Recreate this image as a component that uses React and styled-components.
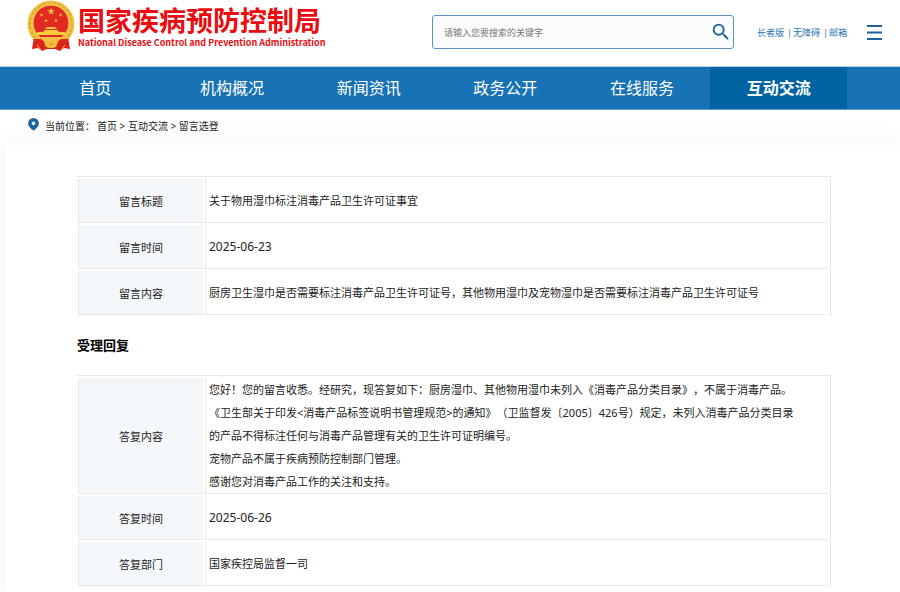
import React from "react";
import styled, { createGlobalStyle } from "styled-components";
import { MdSearch } from "react-icons/md";

const navItems = [
  "首页",
  "机构概况",
  "新闻资讯",
  "政务公开",
  "在线服务",
  "互动交流",
];

const tools = ["长者版", "无障碍", "邮箱"];

const crumbs = ["首页", "互动交流", "留言选登"];

const message = [
  { label: "留言标题", lines: ["关于物用湿巾标注消毒产品卫生许可证事宜"] },
  { label: "留言时间", lines: ["2025-06-23"], date: true },
  {
    label: "留言内容",
    lines: [
      "厨房卫生湿巾是否需要标注消毒产品卫生许可证号，其他物用湿巾及宠物湿巾是否需要标注消毒产品卫生许可证号",
    ],
  },
];

const reply = [
  {
    label: "答复内容",
    lines: [
      "您好！您的留言收悉。经研究，现答复如下：厨房湿巾、其他物用湿巾未列入《消毒产品分类目录》，不属于消毒产品。",
      "《卫生部关于印发<消毒产品标签说明书管理规范>的通知》（卫监督发〔2005〕426号）规定，未列入消毒产品分类目录",
      "的产品不得标注任何与消毒产品管理有关的卫生许可证明编号。",
      "宠物产品不属于疾病预防控制部门管理。",
      "感谢您对消毒产品工作的关注和支持。",
    ],
  },
  { label: "答复时间", lines: ["2025-06-26"], date: true },
  { label: "答复部门", lines: ["国家疾控局监督一司"] },
];

function Emblem() {
  const star = "0,-1 .23,-.31 .95,-.31 .37,.12 .59,.81 0,.39 -.59,.81 -.37,.12 -.95,-.31 -.23,-.31";
  return (
    <svg width="48" height="52" viewBox="0 0 48 52" aria-hidden="true">
      <path d="M7 37 L5 49 L11 48 L15 51 L20 49 H28 L33 51 L37 48 L43 49 L41 37 Z" fill="#d9201c" />
      <circle cx="24" cy="24" r="23.5" fill="#f2c040" />
      <circle cx="24" cy="24" r="21" fill="none" stroke="#e5ab2c" strokeWidth="2" strokeDasharray="3 2" />
      <circle cx="24" cy="23" r="18" fill="#e02a22" stroke="#f8d860" strokeWidth="1" />
      <g fill="#fbc93c">
        <polygon points={star} transform="translate(24 11.5) scale(4)" />
        <polygon points={star} transform="translate(14.5 15) scale(2)" />
        <polygon points={star} transform="translate(33.5 15) scale(2)" />
        <polygon points={star} transform="translate(19 20.5) scale(2)" />
        <polygon points={star} transform="translate(29 20.5) scale(2)" />
        <path d="M18 29 L20 27 H28 L30 29 Z" />
        <path d="M16 32 L18 30 H30 L32 32 H38 V35 H10 V32 Z" />
      </g>
      <path d="M9 37 H39 Q33 43 24 43 Q15 43 9 37 Z" fill="#f3c044" />
      <path d="M6 39 L14 39 L19 43 H29 L34 39 L42 39 L37 45 L29 47 H19 L11 45 Z" fill="#dc241f" />
      <path d="M17 42 Q24 37 31 42 L29 47 Q24 49 19 47 Z" fill="#f4bf3a" />
      <circle cx="24" cy="44" r="2" fill="#e5ab2c" />
      <path d="M10 45 L14 50 M38 45 L34 50" stroke="#f4bf3a" strokeWidth="1" />
    </svg>
  );
}

function Pin() {
  return (
    <svg width="11" height="13" viewBox="0 0 11 13" aria-hidden="true">
      <path
        fillRule="evenodd"
        d="M5.5 0 A5.4 5.4 0 0 1 10.9 5.4 C10.9 8.4 8 10.6 5.5 12.6 C3 10.6 .1 8.4 .1 5.4 A5.4 5.4 0 0 1 5.5 0 Z M5.5 3.6 A1.8 1.8 0 1 0 5.5 7.2 A1.8 1.8 0 1 0 5.5 3.6 Z"
        fill="#1d65a0"
      />
    </svg>
  );
}

function InfoTable({ name, rows }) {
  return (
    <Table aria-label={name}>
      <tbody>
        {rows.map((row) => (
          <tr key={row.label}>
            <Label scope="row">{row.label}</Label>
            <Value $date={row.date}>
              {row.lines.map((line) => (
                <p key={line}>{line}</p>
              ))}
            </Value>
          </tr>
        ))}
      </tbody>
    </Table>
  );
}

export default function App() {
  const [active, setActive] = React.useState("互动交流");
  return (
    <>
      <GlobalStyle />
      <Header>
        <Logo href="#">
          <Emblem />
          <LogoText>
            <LogoName>国家疾病预防控制局</LogoName>
            <LogoSub>National Disease Control and Prevention Administration</LogoSub>
          </LogoText>
        </Logo>
        <Search onSubmit={(e) => e.preventDefault()}>
          <input type="text" aria-label="搜索" placeholder="请输入您要搜索的关键字" />
          <button aria-label="搜索">
            <MdSearch size={22} />
          </button>
        </Search>
        <Tools>
          {tools.map((tool, i) => (
            <React.Fragment key={tool}>
              {i > 0 && <span>|</span>}
              <a href="#">{tool}</a>
            </React.Fragment>
          ))}
        </Tools>
        <MenuButton aria-label="菜单">
          <svg width="15" height="15" viewBox="0 0 15 15">
            <path d="M0 1 H15 M0 7.5 H15 M0 14 H15" stroke="#1b61a0" strokeWidth="2" />
          </svg>
        </MenuButton>
      </Header>
      <Nav>
        {navItems.map((item) => (
          <NavLink
            key={item}
            href="#"
            $active={item === active}
            onClick={() => setActive(item)}
          >
            {item}
          </NavLink>
        ))}
      </Nav>
      <Breadcrumb>
        <Pin />
        <Crumbs>
          <span>当前位置：</span>
          {crumbs.map((crumb, i) => (
            <React.Fragment key={crumb}>
              {i > 0 && " > "}
              <a href="#">{crumb}</a>
            </React.Fragment>
          ))}
        </Crumbs>
      </Breadcrumb>
      <Panel>
        <InfoTable name="留言" rows={message} />
        <Title>受理回复</Title>
        <InfoTable name="受理回复" rows={reply} />
      </Panel>
    </>
  );
}

const GlobalStyle = createGlobalStyle`
  * {
    box-sizing: border-box;
  }
  body {
    margin: 0;
    background-color: #ffffff;
    color: #222222;
    font-family: "Noto Sans", "Noto Sans CJK SC", sans-serif;
    font-size: 11px;
    text-spacing-trim: space-all;
    overflow-x: hidden;
  }
  a {
    color: inherit;
    text-decoration: none;
  }
  p {
    margin: 0;
  }
  button {
    padding: 0;
    border: none;
    background: none;
    cursor: pointer;
  }
  svg {
    display: block;
    flex-shrink: 0;
  }
`;

const Header = styled.header`
  display: flex;
  align-items: center;
  height: 66px;
  padding: 0 18px 2px 27px;
`;

const Logo = styled.a`
  display: flex;
  align-self: flex-start;
  gap: 3px;
  margin-right: auto;
  color: #ea0c10;
  font-family: "Noto Sans CJK SC", sans-serif;
  font-weight: 700;
  white-space: nowrap;
`;

const LogoText = styled.div`
  padding-top: 4px;
`;

const LogoName = styled.div`
  font-size: 27px;
  line-height: 32px;
`;

const LogoSub = styled.div`
  font-size: 9px;
  line-height: 14px;
`;

const Search = styled.form`
  display: flex;
  align-items: center;
  flex: 0 1 302px;
  height: 34px;
  border: 1px solid #5b94c2;
  border-radius: 3px;
  background-color: #fcfcfc;
  input {
    flex: 1;
    min-width: 0;
    padding: 0 11px;
    border: none;
    outline: none;
    background: none;
    font-family: inherit;
    font-size: 9px;
  }
  input::placeholder {
    color: #777777;
  }
  button {
    margin-right: 1px;
    color: #1b61a0;
  }
`;

const Tools = styled.div`
  display: flex;
  margin-left: 23px;
  color: #1f74b3;
  font-size: 9px;
  white-space: nowrap;
  span {
    padding: 0 1px 0 3px;
  }
`;

const MenuButton = styled.button`
  margin-left: 20px;
`;

const Nav = styled.nav`
  display: flex;
  height: 44px;
  padding: 0 53px 0 27px;
  border-top: 1px solid #b9d5e9;
  border-bottom: 1px solid #5a9bcb;
  background-color: #1872b4;
  background-clip: padding-box;
`;

const NavLink = styled.a`
  flex: 1;
  background-color: ${(props) => (props.$active ? "#0063a1" : "transparent")};
  color: white;
  font-size: 16px;
  font-weight: ${(props) => (props.$active ? 700 : 400)};
  line-height: 42px;
  text-align: center;
`;

const Breadcrumb = styled.div`
  display: flex;
  gap: 6px;
  height: 35px;
  padding: 8px 28px 0;
`;

const Crumbs = styled.div`
  font-size: 10px;
  line-height: 16px;
  span {
    margin-right: 2px;
  }
`;

const Panel = styled.main`
  margin-left: 6px;
  padding: 31px 69px 4px 70px;
  background-color: white;
  box-shadow: 0 0 30px rgba(0, 0, 0, 0.05);
`;

const Table = styled.table`
  width: 100%;
  border-collapse: separate;
  border-spacing: 2px;
  border-top: 1px solid #e8e8e8;
  border-right: 1px solid #e8e8e8;
`;

const Label = styled.th`
  width: 125px;
  height: 44px;
  padding: 0;
  border-left: 1px solid #e8e8e8;
  border-bottom: 1px solid #e8e8e8;
  background-color: #f3f7fa;
  font-weight: 400;
`;

const Value = styled.td`
  padding: 0 0 0 3px;
  border-left: 1px solid #e8e8e8;
  border-bottom: 1px solid #e8e8e8;
  font-size: ${(props) => (props.$date ? "12px" : "11px")};
  line-height: 23px;
`;

const Title = styled.h2`
  margin: 16px 0 18px 1px;
  color: #000000;
  font-size: 13px;
  line-height: 24px;
`;
